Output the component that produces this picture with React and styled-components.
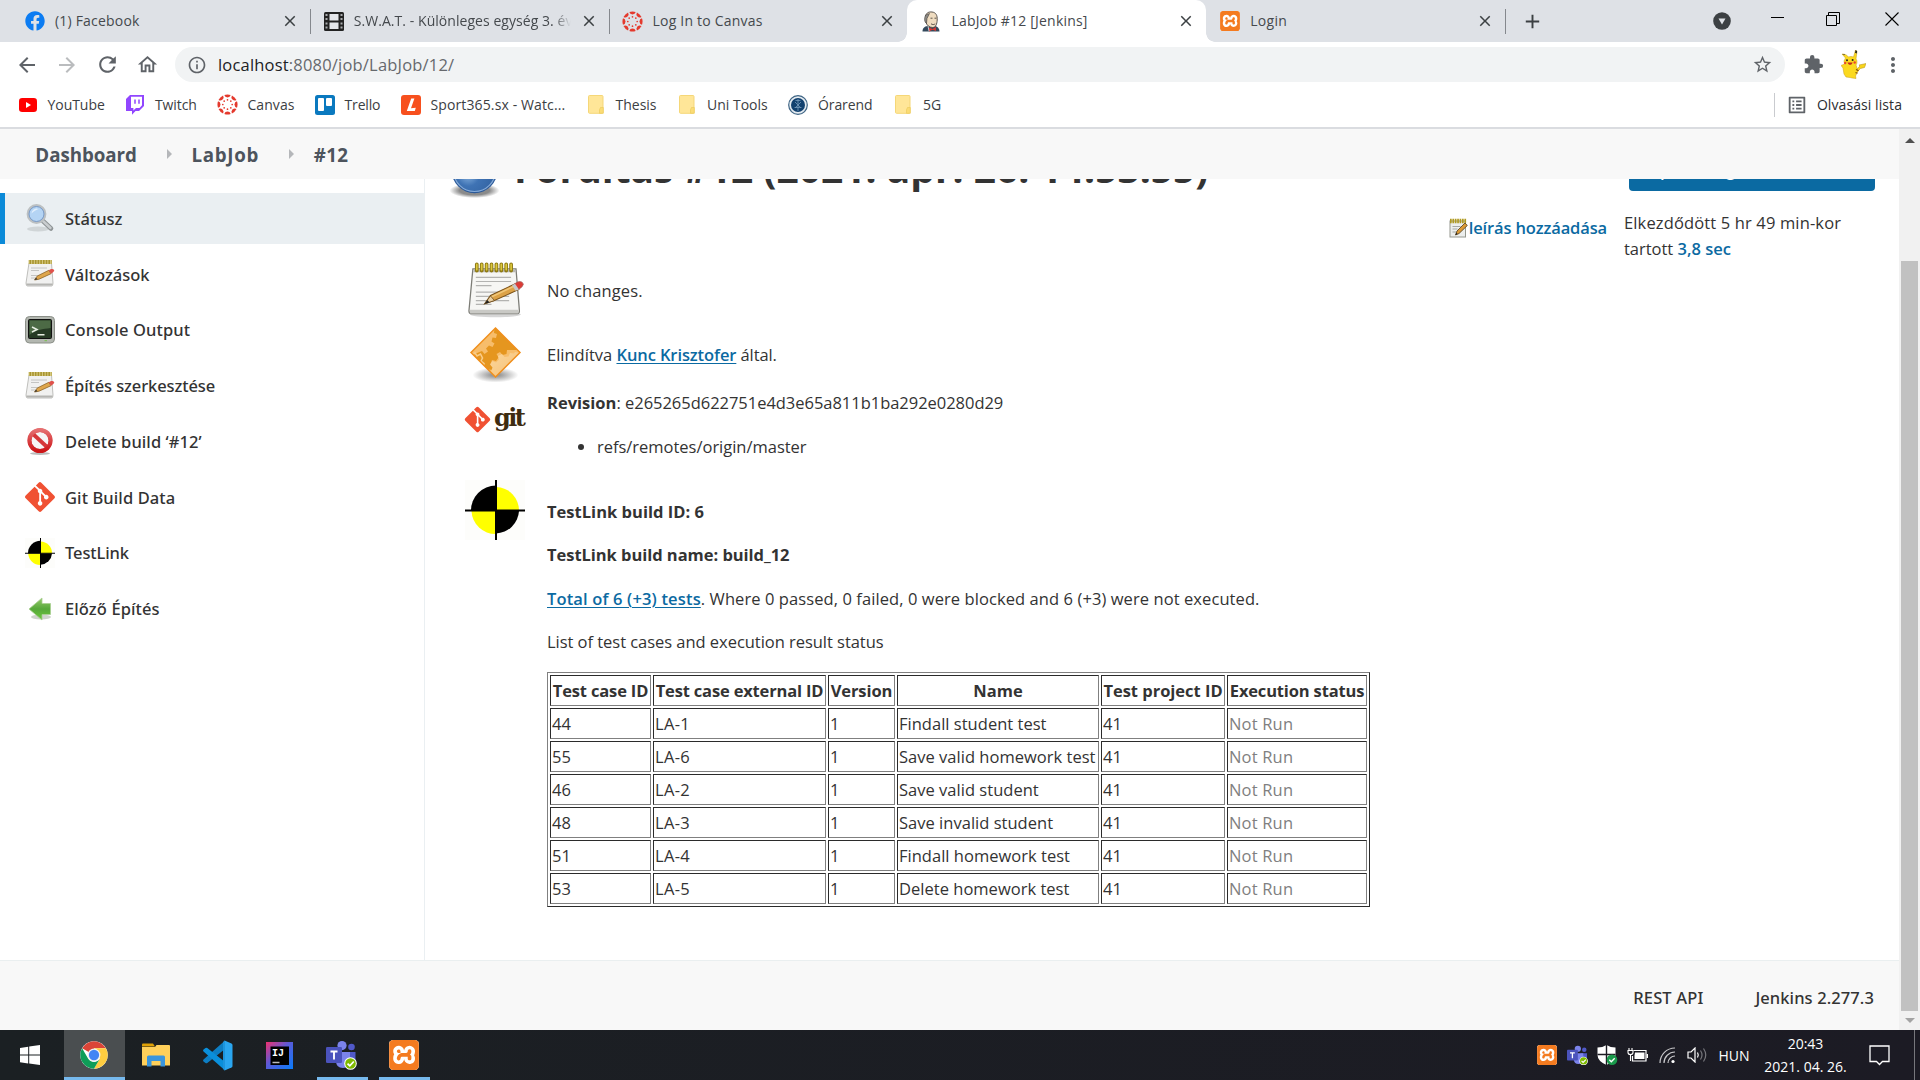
import React from "react";
import styled, { createGlobalStyle, css } from "styled-components";
import {
  MdArrowBack, MdArrowForward, MdRefresh, MdOutlineHome, MdInfoOutline,
  MdStarBorder, MdExtension, MdMoreVert, MdClose, MdAdd, MdOutlineListAlt,
} from "react-icons/md";
import { FaGitAlt, FaFacebook } from "react-icons/fa";
import { SiXampp } from "react-icons/si";

const Global = createGlobalStyle`
  *, *::before, *::after { box-sizing: border-box; }
  html, body { margin: 0; padding: 0; }
  body { width: 1920px; height: 1080px; overflow: hidden; font-family: "Open Sans", "Noto Sans", sans-serif; }
  svg { display: block; flex-shrink: 0; }
`;

/* ---------- shared ---------- */
const Label = styled.span`
  white-space: nowrap;
  letter-spacing: ${(p) => p.$ls || 0}px;
`;

const Window = styled.div`
  width: 1920px;
  height: 1080px;
  display: flex;
  flex-direction: column;
  background: #fff;
`;

/* ---------- browser chrome ---------- */
const TabStrip = styled.div`
  height: 42px;
  flex: none;
  display: flex;
  padding-left: 11px;
  background: #dee1e6;
`;

const Tab = styled.div`
  position: relative;
  width: 298.8px;
  height: 42px;
  padding: 0 9px 0 14px;
  display: flex;
  align-items: center;
  font-size: 14px;
  color: #45494d;
  ${(p) => p.$active && css`
    background: #fff;
    border-radius: 10px 10px 0 0;
    &::before, &::after {
      content: "";
      position: absolute;
      bottom: 0;
      width: 9px;
      height: 9px;
    }
    &::before { left: -9px; background: radial-gradient(circle at 0 0, transparent 8.5px, #fff 9px); }
    &::after { right: -9px; background: radial-gradient(circle at 100% 0, transparent 8.5px, #fff 9px); }
  `}
`;

const TabIcon = styled.div`
  width: 20px;
  height: 42px;
  margin-right: 10px;
  flex: none;
  display: flex;
  align-items: center;
  justify-content: center;
`;

const TabTitle = styled.div`
  flex: 1;
  min-width: 0;
  overflow: hidden;
  line-height: 24px;
  margin-right: ${(p) => (p.$fade ? 7 : 0)}px;
  ${(p) => p.$fade && css`mask-image: linear-gradient(90deg, #000 91%, transparent 99%);`}
`;

const TabClose = styled(MdClose)`
  width: 18px;
  height: 18px;
  color: #3c4043;
  margin-right: 2px;
`;

const TabDivider = styled.i`
  width: 1px;
  height: 25px;
  margin: 9px -1px 0 0;
  background: #85888d;
`;

const NewTab = styled.div`
  width: 55px;
  height: 42px;
  display: flex;
  align-items: center;
  justify-content: center;
  color: #3c4043;
`;

const WindowControls = styled.div`
  margin-left: auto;
  display: flex;
  align-items: center;
  height: 42px;
`;

const Control = styled.div`
  width: ${(p) => p.$w}px;
  height: 42px;
  padding-bottom: ${(p) => p.$up || 0}px;
  display: flex;
  align-items: center;
  justify-content: center;
`;

const Toolbar = styled.div`
  height: 45px;
  flex: none;
  display: flex;
  align-items: center;
  padding-left: 7px;
  color: #5f6368;
`;

const ToolButton = styled.div`
  width: 40px;
  height: 40px;
  flex: none;
  display: flex;
  align-items: center;
  justify-content: center;
  color: ${(p) => (p.$dim ? "#babcbe" : "#5f6368")};
`;

const Omnibox = styled.div`
  width: 1610px;
  height: 35px;
  margin: 0 8px;
  padding: 0 12px;
  border-radius: 18px;
  background: #f1f3f4;
  display: flex;
  align-items: center;
  font-size: 16.5px;
`;

const Url = styled.div`
  flex: 1;
  margin-left: 11px;
  letter-spacing: 0.19px;
  color: #66696d;
  b { font-weight: 400; color: #202124; }
`;

const BookmarkBar = styled.div`
  height: 42px;
  flex: none;
  display: flex;
  align-items: center;
  padding: 0 18px 5px;
  border-bottom: 2px solid #dadce0;
  font-size: 14px;
  line-height: 19px;
  color: #3c4043;
`;

const Bookmark = styled.div`
  width: ${(p) => p.$w}px;
  flex: none;
  display: flex;
  align-items: center;
  gap: 10px;
`;

const BookmarkIcon = styled.div`
  width: 20px;
  height: 20px;
  margin-left: -0.5px;
  display: flex;
  align-items: center;
  justify-content: center;
`;

const ReadingList = styled.div`
  margin-left: auto;
  height: 24px;
  padding-left: 11px;
  border-left: 1px solid #c9cbcf;
  display: flex;
  align-items: center;
  gap: 9px;
  color: #2b2d30;
`;

const ListIcon = styled(MdOutlineListAlt)`
  color: #5f6368;
`;

/* ---------- page ---------- */
const Viewport = styled.div`
  height: 901px;
  flex: none;
  display: flex;
`;

const Page = styled.div`
  width: 1899px;
  display: flex;
  flex-direction: column;
`;

const Breadcrumbs = styled.nav`
  height: 50px;
  flex: none;
  display: flex;
  align-items: center;
  padding-left: 35.3px;
  background: #f8f8f8;
  color: #4d545d;
  font-size: 18.75px;
  font-weight: 700;
`;

const CrumbArrow = styled.i`
  margin: 0 19.7px 0 30px;
  border: 5px solid transparent;
  border-left-color: #b5b7ba;
  border-right-width: 0;
`;

const Body = styled.div`
  height: 781px;
  flex: none;
  display: flex;
`;

const Sidebar = styled.aside`
  width: 425px;
  flex: none;
  padding-top: 14px;
  border-right: 1px solid #eaeff2;
`;

const Task = styled.div`
  height: 50.75px;
  margin-bottom: 5px;
  padding-left: 19px;
  display: flex;
  align-items: center;
  gap: 10px;
  font-family: "Noto Sans", sans-serif;
  font-weight: 500;
  font-size: 16.5px;
  color: #333;
  border-left: 5px solid ${(p) => (p.$active ? "#0b8ad8" : "transparent")};
  background: ${(p) => (p.$active ? "#eaeff2" : "transparent")};
`;

const TaskIcon = styled.div`
  width: 31px;
  display: flex;
  justify-content: center;
`;

const Main = styled.main`
  flex: 1;
  overflow: hidden;
  color: #333;
  font-size: 16.5px;
  line-height: 26px;
`;

const Header = styled.div`
  height: 48px;
  margin-top: -35px;
  padding: 0 24px 0 19px;
  display: flex;
  align-items: center;
`;

const Title = styled.h1`
  margin: 0 0 0 10px;
  font-size: 38.9px;
  line-height: 48px;
  font-weight: 700;
  white-space: nowrap;
  letter-spacing: 0.02px;
`;

const KeepButton = styled.div`
  width: 246px;
  height: 40px;
  margin: 6px 0 0 auto;
  padding: 0 22px;
  border-radius: 4px;
  background: #0b6aa2;
  color: #fff;
  font-weight: 600;
  line-height: 38px;
  white-space: nowrap;
  letter-spacing: -0.3px;
`;

const Info = styled.div`
  height: 66px;
  padding: 18px 24px 0 0;
  display: flex;
  justify-content: flex-end;
`;

const Describe = styled.div`
  height: 26px;
  margin-top: 5px;
  display: flex;
  align-items: center;
  gap: 1px;
`;

const Timing = styled.div`
  width: 251px;
  margin-left: 17px;
`;

const Link = styled.a`
  color: #0b6aa2;
  font-weight: 600;
  letter-spacing: ${(p) => p.$ls || 0}px;
  ${(p) => p.$underline && css`
    text-decoration: underline;
    text-decoration-thickness: 1px;
    text-underline-offset: 2px;
  `}
`;

const BuildRow = styled.section`
  height: ${(p) => p.$h}px;
  padding-left: 40px;
  display: flex;
  gap: 22px;
`;

const RowIcon = styled.div`
  width: 60px;
  flex: none;
  padding-top: ${(p) => p.$top || 0}px;
`;

const RowText = styled.div`
  padding-top: ${(p) => p.$top || 0}px;
  white-space: nowrap;
  display: flex;
  flex-direction: column;
  gap: ${(p) => p.$gap || 0}px;
`;

const Branches = styled.ul`
  margin: 0;
  padding-left: 50px;
  letter-spacing: -0.02px;
`;

const Results = styled.table`
  width: 823px;
  table-layout: fixed;
  border-collapse: separate;
  border-spacing: 2px;
  border: 1px solid;
  border-color: #808080 #2b2b2b #2b2b2b #808080;
  line-height: 27px;
`;

const cell = css`
  padding: 1px;
  border: 1px solid;
  border-color: #2b2b2b #808080 #808080 #2b2b2b;
  white-space: nowrap;
`;

const HeadCell = styled.th`
  ${cell}
  font-weight: 700;
  letter-spacing: ${(p) => p.$ls}px;
`;

const Cell = styled.td`
  ${cell}
  color: ${(p) => (p.$muted ? "gray" : "#333")};
  letter-spacing: ${(p) => p.$ls || 0}px;
`;

const Footer = styled.footer`
  height: 70px;
  flex: none;
  padding: 5px 25px 1px 0;
  border-top: 1px solid #eaeff0;
  background: #f8f8f8;
  display: flex;
  align-items: center;
  justify-content: flex-end;
  gap: 52px;
  font-family: "Noto Sans", sans-serif;
  font-weight: 500;
  font-size: 16.5px;
  color: #333;
`;

const Scrollbar = styled.div`
  width: 21px;
  background: #f1f1f1;
  display: flex;
  flex-direction: column;
  align-items: center;
  padding: 8px 0 7px;
`;

const ScrollArrow = styled.i`
  border: 5px solid transparent;
  ${(p) => p.$up
    ? css`border-bottom-color: #505050; border-top-width: 0; margin-top: 1px;`
    : css`border-top-color: #a3a3a3; border-bottom-width: 0; margin-top: auto;`}
`;

const ScrollThumb = styled.div`
  width: 17px;
  height: 750px;
  margin-top: 118px;
  background: #c1c1c1;
`;

/* ---------- taskbar ---------- */
const Taskbar = styled.div`
  height: 50px;
  flex: none;
  display: flex;
  background: linear-gradient(90deg, #1b2023, #1c1b24);
  color: #fff;
`;

const StartButton = styled.div`
  width: 60px;
  margin-right: 4px;
  display: flex;
  align-items: center;
  justify-content: center;
`;

const AppButton = styled.div`
  width: 61px;
  margin-right: 1px;
  padding-right: 1.5px;
  display: flex;
  flex-direction: column;
  align-items: center;
  justify-content: center;
  position: relative;
  background: ${(p) => (p.$active ? "#4a4e50" : "transparent")};
  ${(p) => p.$open && css`
    &::after {
      content: "";
      position: absolute;
      bottom: 0;
      left: ${p.$active ? 0 : 5}px;
      right: ${p.$active ? 0 : 5}px;
      height: 3px;
      background: #76b9ed;
    }
  `}
`;

const Tray = styled.div`
  margin-left: auto;
  display: flex;
  align-items: center;
  font-size: 14px;
`;

const TrayItem = styled.div`
  width: ${(p) => p.$w || 30}px;
  height: 50px;
  display: flex;
  align-items: center;
  justify-content: center;
`;

const Clock = styled.div`
  width: 99px;
  text-align: center;
  line-height: 23.3px;
`;

const ShowDesktop = styled.i`
  width: 6px;
  height: 50px;
  margin-left: 11px;
  border-left: 1px solid #77777c;
`;

/* ---------- icons ---------- */
const Film = () => (
  <svg width="20" height="19" viewBox="0 0 20 19">
    <rect width="20" height="19" rx="1.5" fill="#222" />
    <path d="M5.5 2h9v6.5h-9zM5.5 10.5h9V17h-9z" fill="#e4e6ea" />
    <path d="M1.5 2h2v2h-2zM1.5 6h2v2h-2zM1.5 10.500h2v2h-2zM1.500 14.500h2v2h-2zM16.500 2h2v2h-2zM16.500 6h2v2h-2zM16.500 10.500h2v2h-2zM16.500 14.500h2v2h-2z" fill="#a9abae" />
  </svg>
);

const CanvasLogo = () => (
  <svg width="21" height="21" viewBox="0 0 21 21">
    <g fill="#e4392d">
      {[0, 45, 90, 135, 180, 225, 270, 315].map((a) => (
        <g key={a} transform={`rotate(${a} 10.5 10.5)`}>
          <path d="M7.300 1.000A9.900 9.900 0 0 1 13.700 1.000A3.300 3.300 0 0 1 7.300 1.000Z" />
          <circle cx="10.500" cy="5.800" r="0.850" />
        </g>
      ))}
    </g>
  </svg>
);

const JenkinsFace = () => (
  <svg width="20" height="21" viewBox="0 0 20 21">
    <path d="M1.500 20.500c0-3.500 2-5 5-5.500l6-.5c4 .5 6 2.500 6 6z" fill="#33495c" />
    <path d="M4.500 5C5.500 1.500 8 .7 11 1c4 .4 5.500 3.500 5.200 8-.2 4-1.500 7.500-4.500 7.500C8 16.500 5.500 14 5 11z" fill="#efdcc0" stroke="#4b4540" strokeWidth=".9" />
    <path d="M4.700 4C3 7 3.200 11 5.500 12.500L6 7.500 8.500 2.500z" fill="#8b8a86" stroke="#4b4540" strokeWidth=".6" />
    <path d="M9.500 7.200h2M13.500 7.200h2M10 12.800c1.500 1 3 1 4.200 0" stroke="#4b4540" strokeWidth=".9" fill="none" />
    <path d="M8 16.500l3.500 1.500L15 16v4l-3.500-1.200L8 20.500z" fill="#d33833" />
    <path d="M7 15l1 5" stroke="#fff" strokeWidth=".7" />
  </svg>
);

const Xampp = styled(SiXampp)`
  width: ${(p) => p.$s}px;
  height: ${(p) => p.$s}px;
  color: #f47b20;
  background: #fff;
  border-radius: ${(p) => p.$s * 0.14}px;
`;

const YouTube = () => (
  <svg width="18" height="14" viewBox="0 0 18 14">
    <rect width="18" height="14" rx="3.200" fill="#f00" />
    <path d="M7 4l5 3-5 3z" fill="#fff" />
  </svg>
);

const Twitch = () => (
  <svg width="18" height="20" viewBox="0 0 18 20">
    <path d="M4 0h14v11l-5 5H9.500L6 19.800V16H0V4z" fill="#9146ff" />
    <path d="M5 1.800h11v8.400L13.500 13H10l-2.600 2.400V13H5z" fill="#fff" />
    <path d="M9 4.500v4.200M13 4.500v4.200" stroke="#9146ff" strokeWidth="1.500" />
  </svg>
);

const Trello = () => (
  <svg width="20" height="20" viewBox="0 0 20 20">
    <rect width="20" height="20" rx="2.500" fill="#0a79bf" />
    <rect x="3" y="3" width="6" height="13" rx="1" fill="#fff" />
    <rect x="11" y="3" width="6" height="8" rx="1" fill="#fff" />
  </svg>
);

const SportLogo = () => (
  <svg width="20" height="20" viewBox="0 0 20 20">
    <rect width="20" height="20" rx="3" fill="#f7501e" />
    <path d="M10.200 3.500h3.200L10 13.200l4.800-.4-1 3.200H5.800z" fill="#fff" />
  </svg>
);

const BookmarkFolder = () => (
  <svg width="16" height="19" viewBox="0 0 16 19">
    <rect x=".5" y=".5" width="14.500" height="17.800" rx="1" fill="#ffe698" stroke="#f5d778" />
    <path d="M12.500 12.500h2.800v5.800h-3.800v-3.500z" fill="#fbdc75" stroke="#eccb5e" strokeWidth=".7" />
  </svg>
);

const Seal = () => (
  <svg width="20" height="20" viewBox="0 0 20 20">
    <circle cx="10" cy="10" r="9.300" fill="#e4ebf1" stroke="#3e6484" strokeWidth="1.200" />
    <circle cx="10" cy="10" r="7" fill="#12416f" />
    <path d="M10 4v12M7 7l6 6M13 7l-6 6M6.500 12.500h7M7.500 5.500h5" stroke="#7499bb" strokeWidth=".8" />
  </svg>
);

const Pikachu = () => (
  <svg width="25" height="29" viewBox="0 0 25 29">
    <path d="M16 19l3-3-1-1 7-1.500-1.500 4-4 1L16 22z" fill="#f8d41a" stroke="#b08c12" strokeWidth=".5" />
    <path d="M1 4c3 0 5 1 6.500 3 1.500-.7 3.500-.7 5 0L14.500 0l1.500 1.500L15 9c1.300 1.500 1.300 4.500 0 6l2 6-2.500 5 .5 2.500-4-.5-2-.5-4-.5-2-3L2 18 0 15.500 3.500 14 3 11 4.500 8z" fill="#fbd91f" stroke="#c79d16" strokeWidth=".5" />
    <path d="M14 2.800L14.700 0l1.300 1-.2 2.500zM1 4l2.500.200.500 1z" fill="#222" />
    <circle cx="6" cy="10.300" r="1" fill="#222" /><circle cx="11.600" cy="10" r="1" fill="#222" />
    <path d="M6.500 12.500h5c-.5 3-4 3.300-5 0z" fill="#c42b20" />
    <circle cx="4.200" cy="13" r="1.200" fill="#ea4b2a" /><circle cx="13.700" cy="12.500" r="1.200" fill="#ea4b2a" />
    <path d="M15 19.500l2.500 1.300M14.500 22.500l2 .8" stroke="#7b4a12" strokeWidth="1.200" />
  </svg>
);

const Magnifier = () => (
  <svg width="30" height="30" viewBox="0 0 30 30">
    <ellipse cx="13" cy="26" rx="11" ry="2.500" fill="#c5cacc" opacity=".7" />
    <path d="M18 18l8 7.500" stroke="#8f9496" strokeWidth="4.600" strokeLinecap="round" />
    <path d="M18 18l7.500 7" stroke="#c9cdcf" strokeWidth="2.400" strokeLinecap="round" />
    <circle cx="11.500" cy="11" r="8.600" fill="#b4d4f4" stroke="#bcc0c2" strokeWidth="2.600" />
    <circle cx="11.500" cy="11" r="7.500" fill="none" stroke="#6f95c8" strokeWidth=".9" />
    <path d="M6.500 10.500a5 5 0 0 1 7-4.500C11.500 7 8.500 8 6.500 10.500z" fill="#e1effc" />
  </svg>
);

const Notepad = () => (
  <svg width="60" height="60" viewBox="0 0 60 60">
    <g transform="translate(2 2.500) scale(.98 .93)">
      <ellipse cx="29" cy="57" rx="26" ry="3" fill="#bbb" opacity=".6" />
      <path d="M6 8h44l3.500 45q0 3-2 3H4q-2 0-2-3z" fill="#f6f6f4" stroke="#7c7c76" strokeWidth="1.300" />
      <path d="M3 52h49.500v3q0 1-1 1H4q-1 0-1-1z" fill="#c9c9c5" />
      <path d="M7 8h42l.5 3.500h-43z" fill="#b9b9b4" />
      <path d="M10 10V3M15 10V3M20 10V3M25 10V3M30 10V3M35 10V3M40 10V3M45 10V3" stroke="#8f7a14" strokeWidth="3.800" strokeLinecap="round" />
      <path d="M10 9V3M15 9V3M20 9V3M25 9V3M30 9V3M35 9V3M40 9V3M45 9V3" stroke="#dcc83c" strokeWidth="1.700" strokeLinecap="round" />
      <path d="M9 17h36M9 21.500h36M9 26h16M9 33h36M9 37.500h34M9 42h34M9 46h16" stroke="#b3b3b1" strokeWidth="1.300" />
      <path d="M18 45.500l6-9 25-12.500 4 6-25 12z" fill="#dca247" stroke="#7b531a" strokeWidth="1.100" />
      <path d="M23 39l27-13.500" stroke="#f0c677" strokeWidth="1.600" />
      <path d="M18 45.500l6-8.500 4 5z" fill="#e9cfa2" stroke="#6b4a1c" strokeWidth=".8" />
      <path d="M18 45.500l2.800-4 2.200 2.700z" fill="#222" />
      <path d="M48 24.500l3.500-2.500q5-1.500 6 2.500-.5 3-5 5.500z" fill="#dc3b36" stroke="#a5605d" strokeWidth=".8" />
      <path d="M46 25.500l3-1.500 4 6-3.500 1.500z" fill="#c6c7ca" />
    </g>
  </svg>
);

const NotepadSmall = () => (
  <svg width="30" height="30" viewBox="0 0 30 30">
    <path d="M4 4h22.500l1.500 20q0 3-1.500 3h-24Q1 27 1 24z" fill="#f1f1f0" stroke="#b0b0ac" strokeWidth=".8" />
    <path d="M1.500 25.500h26" stroke="#b5b5b2" strokeWidth="2" />
    <path d="M3.500 3h23.500" stroke="#d5c87e" strokeWidth="4" />
    <path d="M4.500 3h22" stroke="#a99530" strokeWidth="4" strokeDasharray="1.600 1.100" />
    <path d="M6 9h16M6 11.500h8M6 16.500h15M6 19h6" stroke="#c4c4c2" strokeWidth="1" />
    <path d="M9.500 21l2.800-4 11.500-5.700 2.200 3.400L14 20.200z" fill="#dfa64c" stroke="#8d6428" strokeWidth=".8" />
    <path d="M9.500 21l1.500-2.300 1.500 1.600z" fill="#333" />
    <path d="M23.800 11.300l2.200-1.200q3-.8 3.300 1.500-.2 1.500-3.300 3.100z" fill="#df514b" />
  </svg>
);

const Terminal = () => (
  <svg width="30" height="28" viewBox="0 0 30 28">
    <rect x=".5" y=".5" width="29" height="26.500" rx="4" fill="#b3b7b0" stroke="#8b8f88" />
    <rect x="3.500" y="3.500" width="23" height="19" rx="1" fill="#263a24" stroke="#111" />
    <path d="M4.500 4.500h21v7.500C18 13 10 14 4.500 19z" fill="#4c6a45" />
    <path d="M7 11l5 2.500L7 16M12.500 18.800h7" stroke="#e7eee2" strokeWidth="1.500" fill="none" />
    <path d="M19.500 24.700h2.500" stroke="#78c04a" />
  </svg>
);

const Forbidden = () => (
  <svg width="28" height="28" viewBox="0 0 28 28">
    <defs>
      <linearGradient id="forbid" x1="0" y1="0" x2="0" y2="1">
        <stop offset="0" stopColor="#e56f70" /><stop offset="1" stopColor="#cd1518" />
      </linearGradient>
    </defs>
    <ellipse cx="14" cy="26.500" rx="10" ry="1.500" fill="#bbb" />
    <circle cx="14" cy="13.500" r="12.600" fill="url(#forbid)" />
    <circle cx="14" cy="13.500" r="8.600" fill="#f6f6f6" />
    <path d="M7 7l14 13" stroke="#d6383a" strokeWidth="3.800" />
    <circle cx="14" cy="13.500" r="10.400" fill="none" stroke="url(#forbid)" strokeWidth="3.600" />
  </svg>
);

const TestLinkMark = ({ size = 30 }) => (
  <svg width={size} height={size} viewBox="0 0 60 60">
    <rect width="60" height="60" fill="#fdfdfb" />
    <path d="M31 31V5.500A25 25 0 0 0 6 31z" fill="#000" />
    <path d="M31 31V7A23.500 23.500 0 0 1 54 31z" fill="#ff0" />
    <path d="M31 31H6.500A24 24 0 0 0 31 54z" fill="#ff0" />
    <path d="M31 31H54A24 24 0 0 1 31 53.500z" fill="#000" />
    <path d="M31 0v60M0 30.500h60" stroke="#000" strokeWidth="2" />
  </svg>
);

const GreenArrow = () => (
  <svg width="24" height="24" viewBox="0 0 24 24">
    <defs>
      <linearGradient id="arrow" x1="0" y1="0" x2="0" y2="1">
        <stop offset="0" stopColor="#93c96a" /><stop offset=".5" stopColor="#57a83a" /><stop offset="1" stopColor="#6cc93a" />
      </linearGradient>
    </defs>
    <ellipse cx="13" cy="20" rx="10" ry="2.500" fill="#cfd3cc" />
    <path d="M1 12L14 1v5.500h8.500v11H14V23z" fill="url(#arrow)" stroke="#a9cf92" strokeWidth=".8" />
  </svg>
);

const BlueBall = () => (
  <svg width="60" height="60" viewBox="0 0 60 60">
    <defs>
      <radialGradient id="ball" cx=".35" cy=".6" r=".6">
        <stop offset="0" stopColor="#86b1de" /><stop offset=".45" stopColor="#3f73b4" /><stop offset="1" stopColor="#3465a4" />
      </radialGradient>
      <radialGradient id="ballShadow"><stop offset=".6" stopColor="#8b8b8b" /><stop offset="1" stopColor="#8b8b8b" stopOpacity="0" /></radialGradient>
    </defs>
    <ellipse cx="30.500" cy="52.500" rx="25" ry="7.500" fill="url(#ballShadow)" />
    <circle cx="30.500" cy="32.500" r="22.800" fill="#2c5a99" />
    <circle cx="30.500" cy="32.500" r="21" fill="url(#ball)" stroke="#86abd8" strokeWidth="1.200" />
  </svg>
);

const GearDiamond = () => (
  <svg width="60" height="60" viewBox="0 0 60 60">
    <defs>
      <clipPath id="diamondClip"><path d="M30.500 4L55 28.500 30.500 53 6 28.500z" /></clipPath>
      <radialGradient id="diamondShadow"><stop offset=".2" stopColor="#9a9a9a" /><stop offset="1" stopColor="#9a9a9a" stopOpacity="0" /></radialGradient>
      <linearGradient id="gear" x1="0" y1="0" x2="1" y2="1">
        <stop offset="0" stopColor="#fbd79f" /><stop offset="1" stopColor="#f4bb6a" />
      </linearGradient>
    </defs>
    <ellipse cx="30.500" cy="51" rx="23" ry="7.500" fill="url(#diamondShadow)" />
    <g clipPath="url(#diamondClip)">
      <rect width="60" height="60" fill="#f7bd6b" />
      <path d="M30 0l-1 9 3 1-1 4-3.500-.5-1 4 3 2-2 3.500-3.500-1.500-3 3 2 3-3.500 2.500-2.500-3L0 34V60h20l6-8-3-3 1-3.500 3.500.5 1-4-3-2 1.500-4 4 1 2.500-3.500-2-3.500 3.500-2 2.500 3 4-1 .5-4H60V0z" fill="#e5961f" />
      <path d="M27 60l-1.500-7-3.500-.5.500-4.500 3.500-.500 1.500-4-2.500-3 2.500-3.500 3.500 1.500 3-3-1-3.500 4-2 2.500 3 4-.5 1.500-3.500 4 .5L50 28l10 2v30z" fill="url(#gear)" />
      <path d="M5 33l5-4 2 3 3.500-2 2 4-1.500 3 3 2.500-1 4" fill="none" stroke="#f9cc88" strokeWidth="1.600" />
    </g>
    <path d="M30.500 4L55 28.500 30.500 53 6 28.500z" fill="none" stroke="#f08f1d" strokeWidth="1.500" />
  </svg>
);

const GitDiamond = styled(FaGitAlt)`
  color: #f05133;
  width: ${(p) => p.$s}px;
  height: ${(p) => p.$s}px;
  margin-left: ${(p) => p.$ml || 0}px;
`;

const GitLogo = styled.div`
  height: 26px;
  display: flex;
  align-items: center;
  gap: 2px;
  color: #3e2c11;
`;

const GitWord = styled.span`
  font-family: "DejaVu Serif", serif;
  font-weight: 700;
  font-size: 24px;
  line-height: 26px;
  letter-spacing: -2.6px;
  padding-bottom: 2px;
`;

const PencilNote = () => (
  <svg width="19" height="20" viewBox="0 0 19 20">
    <rect x="1" y="3" width="15.500" height="16" fill="#eceeed" stroke="#96988f" />
    <path d="M1 3h16.500" stroke="#b09a22" strokeWidth="4.500" strokeDasharray="1.700 .7" />
    <path d="M3.500 8.500h8M3.500 11h5M3.500 14h4" stroke="#a5a9a5" />
    <path d="M6.500 17l1.500-4 8-8 2.300 2.500L10 15.500z" fill="#dd9a34" stroke="#5f4a26" strokeWidth=".9" />
    <path d="M6.500 17l.8-2.200 1.400 1.300z" fill="#222" />
  </svg>
);

const WindowsLogo = () => (
  <svg width="20" height="20" viewBox="0 0 20 20" fill="#fff">
    <path d="M0 2.900L8.200 1.700v7.800H0zM9.200 1.600L20 0v9.500H9.200zM0 10.500h8.200v7.900L0 17.200zM9.200 10.500H20V20L9.200 18.500z" />
  </svg>
);

const ChromeLogo = () => (
  <svg width="28" height="28" viewBox="0 0 48 48">
    <circle cx="24" cy="24" r="23.500" fill="#fff" />
    <path d="M24 24L3.650 12.250A23.500 23.500 0 0 1 44.350 12.250H24z" fill="#db4437" />
    <path d="M44.350 12.250A23.500 23.500 0 0 1 24 47.500L34.200 29.900 24 12.250z" fill="#ffcd40" />
    <path d="M24 47.500A23.500 23.500 0 0 1 3.650 12.250L13.800 29.900A11.750 11.750 0 0 0 34.200 29.900z" fill="#0f9d58" />
    <circle cx="24" cy="24" r="11" fill="#f1f1f1" />
    <circle cx="24" cy="24" r="8.800" fill="#4285f4" />
  </svg>
);

const ExplorerIcon = () => (
  <svg width="28" height="24" viewBox="0 0 28 24">
    <path d="M0 1.500Q0 .5 1 .5h10l2 3H0z" fill="#e0a106" />
    <path d="M0 4h13l1.500-2H27q1 0 1 1v19.500H0z" fill="#ffd05a" />
    <path d="M5 23.500V14q0-1.500 1.500-1.500h15q1.500 0 1.500 1.500v9.500h-4.500V18h-9v5.500z" fill="#3a95dc" />
  </svg>
);

const VsCode = () => (
  <svg width="31" height="31" viewBox="0 0 31 31">
    <path d="M22.500 1L1.500 19.500q-1 1 0 2L3.500 23q.8.700 1.800 0L23 9z" fill="#0d7ec4" />
    <path d="M22.500 30L1.500 11.500q-1-1 0-2L3.500 8q.8-.700 1.800 0L23 22z" fill="#0a8fdb" />
    <path d="M22.500.5L29.500 3.500q1 .6 1 1.500v21q0 1-1 1.500L22.500 30.500z" fill="#2aa6f0" />
    <path d="M23 .5v30L21 29V2z" fill="#1c94dd" />
  </svg>
);

const IntelliJ = () => (
  <svg width="27" height="27" viewBox="0 0 27 27">
    <defs>
      <linearGradient id="ij" x1="0" y1="0" x2="1" y2="1">
        <stop offset="0" stopColor="#f0316f" /><stop offset=".45" stopColor="#5a5ad8" /><stop offset="1" stopColor="#087cfa" />
      </linearGradient>
    </defs>
    <rect width="27" height="27" fill="url(#ij)" />
    <rect x="4.500" y="4.500" width="18.500" height="18.500" fill="#000" />
    <text x="6" y="14" fill="#fff" fontFamily="Liberation Mono, monospace" fontWeight="700" fontSize="10">IJ</text>
    <path d="M6.500 20.500h7" stroke="#bbb" strokeWidth="1.500" />
  </svg>
);

const Teams = ({ size = 31 }) => (
  <svg width={size} height={size * 0.97} viewBox="0 0 31 30">
    <circle cx="16" cy="5.500" r="4.600" fill="#7b83eb" />
    <circle cx="25.500" cy="7" r="3.300" fill="#5059c9" />
    <path d="M20 12h9.500v8q0 5-5 5H20z" fill="#5059c9" />
    <path d="M10 12h14v9q0 7-7 7t-7-7z" fill="#7b83eb" />
    <rect x="0" y="7" width="16" height="16" rx="1.200" fill="#4b53bc" />
    <path d="M4.500 11.500h7M8 11.500v8" stroke="#fff" strokeWidth="1.900" />
    <circle cx="24.500" cy="23.500" r="6.300" fill="#fff" />
    <circle cx="24.500" cy="23.500" r="5.300" fill="#7eb900" />
    <path d="M21.500 23.500l2.300 2.300 4-4.300" stroke="#fff" strokeWidth="1.700" fill="none" />
  </svg>
);

const Shield = () => (
  <svg width="21" height="21" viewBox="0 0 21 21">
    <path d="M9.500 0q4 2.500 9 2.500V10q0 6-9 10Q.5 16 .5 10V2.500Q5.500 2.500 9.500 0z" fill="#fff" />
    <path d="M9.500 0v20M.5 9.500h18" stroke="#1c1b22" strokeWidth="1.400" />
    <circle cx="15" cy="14.800" r="5.300" fill="#1a9a4b" />
    <path d="M12.300 14.800l2 2 3.400-3.600" stroke="#fff" strokeWidth="1.300" fill="none" />
  </svg>
);

const Battery = () => (
  <svg width="21" height="16" viewBox="0 0 21 16" fill="none" stroke="#fff">
    <path d="M6.500 3.500H19v10.500H5.500V9" strokeWidth="1.200" />
    <path d="M8 5.500h9.500v6.500H7.500V8.500z" fill="#fff" stroke="none" />
    <path d="M20.300 7v4" strokeWidth="1.400" />
    <path d="M1 3.500h5v2q0 2-2.500 2T1 5.500zM2 1v2.500M5 1v2.500M3.500 7.500V14" strokeWidth="1.100" />
  </svg>
);

const Wifi = () => (
  <svg width="17" height="17" viewBox="0 0 17 17" fill="none" stroke="#c7c7ca" strokeWidth="1.200">
    <path d="M1 16A15 15 0 0 1 16 1M5 16A11 11 0 0 1 16 5M9 16A7 7 0 0 1 16 9" />
    <circle cx="14" cy="14.500" r="1.600" fill="#fff" stroke="none" />
  </svg>
);

const Volume = () => (
  <svg width="21" height="16" viewBox="0 0 21 16" fill="none" stroke="#fff" strokeWidth="1.200">
    <path d="M1 5h3l4-4v14l-4-4H1z" />
    <path d="M10.500 5.500q1.500 2.500 0 5" />
    <path d="M13.500 3.500q3 4.500 0 9M16.500 1.500q4.500 6.500 0 13" stroke="#77777c" />
  </svg>
);

const Notification = () => (
  <svg width="21" height="21" viewBox="0 0 21 21" fill="none" stroke="#fff" strokeWidth="1.300">
    <path d="M1 1h19v15.500h-6.500L10.500 19.500 7.500 16.500H1z" />
  </svg>
);

/* ---------- data ---------- */
const tabs = [
  { icon: <FaFacebook size={20} color="#0c7cf2" />, title: "(1) Facebook", ls: 0.2, divider: true },
  { icon: <Film />, title: "S.W.A.T. - Különleges egység 3. év", ls: 0.05, fade: true, divider: true },
  { icon: <CanvasLogo />, title: "Log In to Canvas", ls: 0.2 },
  { icon: <JenkinsFace />, title: "LabJob #12 [Jenkins]", ls: 0.2, active: true },
  { icon: <Xampp $s={20} />, title: "Login", ls: 0.3, divider: true },
];

const bookmarks = [
  { icon: <YouTube />, title: "YouTube", w: 107.5, ls: -0.05 },
  { icon: <Twitch />, title: "Twitch", w: 92.5, ls: -0.1 },
  { icon: <CanvasLogo />, title: "Canvas", w: 97, ls: 0.05 },
  { icon: <Trello />, title: "Trello", w: 86, ls: -0.15 },
  { icon: <SportLogo />, title: "Sport365.sx - Watc...", w: 185, ls: 0.12 },
  { icon: <BookmarkFolder />, title: "Thesis", w: 91.5, ls: 0 },
  { icon: <BookmarkFolder />, title: "Uni Tools", w: 111, ls: 0 },
  { icon: <Seal />, title: "Órarend", w: 105, ls: -0.1 },
  { icon: <BookmarkFolder />, title: "5G", w: 60, ls: 0.1 },
];

const tasks = [
  { icon: <Magnifier />, title: "Státusz", ls: 0, active: true },
  { icon: <NotepadSmall />, title: "Változások", ls: 0 },
  { icon: <Terminal />, title: "Console Output", ls: 0.1 },
  { icon: <NotepadSmall />, title: "Építés szerkesztése", ls: -0.11 },
  { icon: <Forbidden />, title: "Delete build ‘#12’", ls: 0.08 },
  { icon: <GitDiamond $s={34} />, title: "Git Build Data", ls: 0.1 },
  { icon: <TestLinkMark />, title: "TestLink", ls: -0.1 },
  { icon: <GreenArrow />, title: "Előző Építés", ls: 0.1 },
];

const columns = [
  { title: "Test case ID", w: 101, ls: -0.15 },
  { title: "Test case external ID", w: 173, ls: -0.17 },
  { title: "Version", w: 67, ls: -0.08 },
  { title: "Name", w: 202, ls: 0 },
  { title: "Test project ID", w: 124, ls: -0.02 },
  { title: "Execution status", w: 140, ls: -0.16 },
];

const results = [
  ["44", "LA-1", "Findall student test"],
  ["55", "LA-6", "Save valid homework test"],
  ["46", "LA-2", "Save valid student"],
  ["48", "LA-3", "Save invalid student"],
  ["51", "LA-4", "Findall homework test"],
  ["53", "LA-5", "Delete homework test"],
];

export default function App() {
  return (
    <Window>
      <Global />
      <TabStrip>
        {tabs.map((t) => (
          <React.Fragment key={t.title}>
            <Tab $active={t.active}>
              <TabIcon>{t.icon}</TabIcon>
              <TabTitle $fade={t.fade}><Label $ls={t.ls}>{t.title}</Label></TabTitle>
              <TabClose />
            </Tab>
            {t.divider && <TabDivider />}
          </React.Fragment>
        ))}
        <NewTab><MdAdd size={23} /></NewTab>
        <WindowControls>
          <Control $w={60}>
            <svg width="18" height="18" viewBox="0 0 18 18">
              <circle cx="9" cy="9" r="8.800" fill="#3c4043" />
              <path d="M5.500 6.500h7L9 12.500z" fill="#dee1e6" />
            </svg>
          </Control>
          <Control $w={51} $up={7}>
            <svg width="13" height="3" viewBox="0 0 13 3"><path d="M0 1.500h13" stroke="#000" /></svg>
          </Control>
          <Control $w={60} $up={5}>
            <svg width="14" height="14" viewBox="0 0 14 14" fill="none" stroke="#000">
              <path d="M.5 3.500h10v10H.5zM2.500 3.500v-3h11v11h-3" />
            </svg>
          </Control>
          <Control $w={57} $up={5}>
            <svg width="14" height="14" viewBox="0 0 14 14"><path d="M.5.500l13 13M13.500.500l-13 13" stroke="#000" strokeWidth="1.100" /></svg>
          </Control>
        </WindowControls>
      </TabStrip>

      <Toolbar>
        <ToolButton><MdArrowBack size={24} /></ToolButton>
        <ToolButton $dim><MdArrowForward size={24} /></ToolButton>
        <ToolButton><MdRefresh size={25} /></ToolButton>
        <ToolButton><MdOutlineHome size={23} /></ToolButton>
        <Omnibox>
          <MdInfoOutline size={20} />
          <Url><b>localhost</b>:8080/job/LabJob/12/</Url>
          <MdStarBorder size={21} />
        </Omnibox>
        <ToolButton><MdExtension size={21} /></ToolButton>
        <ToolButton><Pikachu /></ToolButton>
        <ToolButton><MdMoreVert size={24} /></ToolButton>
      </Toolbar>

      <BookmarkBar>
        {bookmarks.map((b) => (
          <Bookmark key={b.title} $w={b.w}>
            <BookmarkIcon>{b.icon}</BookmarkIcon>
            <Label $ls={b.ls}>{b.title}</Label>
          </Bookmark>
        ))}
        <ReadingList>
          <ListIcon size={22} />
          <Label $ls={0.08}>Olvasási lista</Label>
        </ReadingList>
      </BookmarkBar>

      <Viewport>
        <Page>
          <Breadcrumbs>
            <Label $ls={-0.05}>Dashboard</Label>
            <CrumbArrow />
            <Label $ls={0.65}>LabJob</Label>
            <CrumbArrow />
            <Label $ls={0.4}>#12</Label>
          </Breadcrumbs>

          <Body>
            <Sidebar>
              {tasks.map((t) => (
                <Task key={t.title} $active={t.active}>
                  <TaskIcon>{t.icon}</TaskIcon>
                  <Label $ls={t.ls}>{t.title}</Label>
                </Task>
              ))}
            </Sidebar>

            <Main>
              <Header>
                <BlueBall />
                <Title>Fordítás #12 (2021. ápr. 26. 14:53:55)</Title>
                <KeepButton>Építés megőrzése örökre</KeepButton>
              </Header>
              <Info>
                <Describe>
                  <PencilNote />
                  <Link $ls={-0.14}>leírás hozzáadása</Link>
                </Describe>
                <Timing>
                  <Label $ls={0.14}>Elkezdődött 5 hr 49 min-kor</Label>
                  <br />
                  <Label $ls={-0.02}>tartott </Label>
                  <Link>3,8 sec</Link>
                </Timing>
              </Info>

              <BuildRow $h={66}>
                <RowIcon $top={1}><Notepad /></RowIcon>
                <RowText $top={20}><Label $ls={0.12}>No changes.</Label></RowText>
              </BuildRow>

              <BuildRow $h={65}>
                <RowIcon><GearDiamond /></RowIcon>
                <RowText $top={18}>
                  <span>
                    <Label $ls={0}>Elindítva </Label>
                    <Link $underline $ls={-0.1}>Kunc Krisztofer</Link>
                    <Label $ls={-0.1}> által.</Label>
                  </span>
                </RowText>
              </BuildRow>

              <BuildRow $h={91}>
                <RowIcon $top={17}>
                  <GitLogo><GitDiamond $s={29} $ml={-2} /><GitWord>git</GitWord></GitLogo>
                </RowIcon>
                <RowText $top={1} $gap={18}>
                  <span><b>Revision</b>: <Label $ls={-0.03}>e265265d622751e4d3e65a811b1ba292e0280d29</Label></span>
                  <Branches><li>refs/remotes/origin/master</li></Branches>
                </RowText>
              </BuildRow>

              <BuildRow $h={470}>
                <RowIcon><TestLinkMark size={60} /></RowIcon>
                <RowText $top={19} $gap={17.33}>
                  <b><Label $ls={0.02}>TestLink build ID: 6</Label></b>
                  <b><Label $ls={-0.04}>TestLink build name: build_12</Label></b>
                  <span>
                    <Link $underline $ls={0.15}>Total of 6 (+3) tests</Link>
                    <Label $ls={0.08}>. Where 0 passed, 0 failed, 0 were blocked and 6 (+3) were not executed.</Label>
                  </span>
                  <Label $ls={-0.04}>List of test cases and execution result status</Label>
                  <Results>
                    <colgroup>
                      {columns.map((c) => <col key={c.title} width={c.w} />)}
                    </colgroup>
                    <thead>
                      <tr>
                        {columns.map((c) => <HeadCell key={c.title} $ls={c.ls}>{c.title}</HeadCell>)}
                      </tr>
                    </thead>
                    <tbody>
                      {results.map(([id, ext, name]) => (
                        <tr key={id}>
                          <Cell>{id}</Cell>
                          <Cell $ls={0.3}>{ext}</Cell>
                          <Cell>1</Cell>
                          <Cell $ls={0.02}>{name}</Cell>
                          <Cell>41</Cell>
                          <Cell $muted $ls={0.18}>Not Run</Cell>
                        </tr>
                      ))}
                    </tbody>
                  </Results>
                </RowText>
              </BuildRow>
            </Main>
          </Body>

          <Footer>
            <Label $ls={0.15}>REST API</Label>
            <Label $ls={0.1}>Jenkins 2.277.3</Label>
          </Footer>
        </Page>

        <Scrollbar>
          <ScrollArrow $up />
          <ScrollThumb />
          <ScrollArrow />
        </Scrollbar>
      </Viewport>

      <Taskbar>
        <StartButton><WindowsLogo /></StartButton>
        <AppButton $active $open><ChromeLogo /></AppButton>
        <AppButton><ExplorerIcon /></AppButton>
        <AppButton><VsCode /></AppButton>
        <AppButton><IntelliJ /></AppButton>
        <AppButton $open><Teams /></AppButton>
        <AppButton $open><Xampp $s={30} /></AppButton>
        <Tray>
          <TrayItem><Xampp $s={20} /></TrayItem>
          <TrayItem><Teams size={21} /></TrayItem>
          <TrayItem><Shield /></TrayItem>
          <TrayItem><Battery /></TrayItem>
          <TrayItem><Wifi /></TrayItem>
          <TrayItem><Volume /></TrayItem>
          <TrayItem $w={44}><Label>HUN</Label></TrayItem>
          <Clock><Label>20:43</Label><br /><Label>2021. 04. 26.</Label></Clock>
          <TrayItem $w={48}><Notification /></TrayItem>
          <ShowDesktop />
        </Tray>
      </Taskbar>
    </Window>
  );
}
